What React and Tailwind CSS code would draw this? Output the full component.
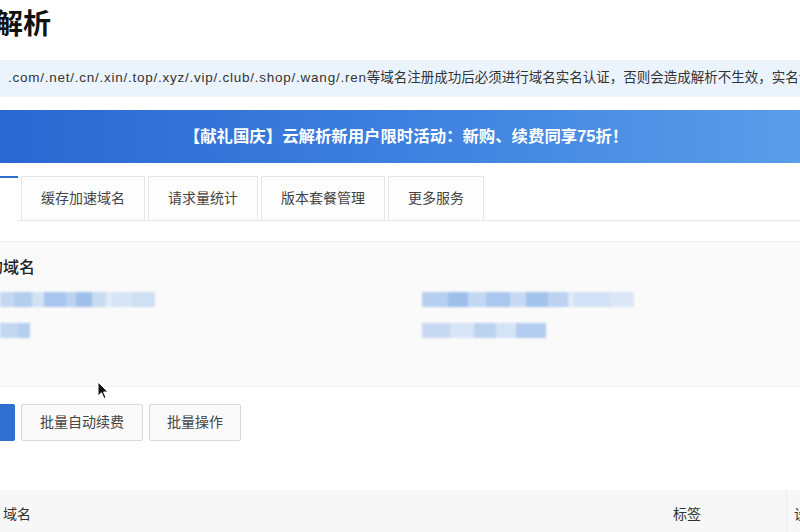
const blurRow1 = [
  ["#c4d8f2", 14], ["#b3cdef", 18], ["#d3e2f5", 12], ["#a8c6ed", 22], ["#bcd3f0", 10], ["#9fc0ea", 16], ["#c9dbf3", 14], ["#e1ebf8", 6], ["#d7e4f6", 20], ["#cfdff4", 23],
];
const blurRow2 = [["#c2d7f1", 18], ["#b5cdef", 12]];
const blurRow3 = [
  ["#b6cff0", 26], ["#9fbfea", 20], ["#c3d8f2", 18], ["#aac7ed", 24], ["#c6daf3", 16], ["#a4c3ec", 22], ["#bcd2f0", 20], ["#e0eaf8", 6], ["#d2e1f5", 36], ["#dbe7f7", 24],
];
const blurRow4 = [["#c8daf3", 28], ["#d8e5f6", 24], ["#bcd3f0", 22], ["#d5e3f6", 20], ["#b3ccef", 30]];

function Mosaic({ cells }) {
  return (
    <div className="flex h-[15px] blur-[1px]">
      {cells.map(([c, w], i) => (
        <div key={i} style={{ background: c, width: w }} className="h-full" />
      ))}
    </div>
  );
}

const tabs = ["缓存加速域名", "请求量统计", "版本套餐管理", "更多服务"];

export default function App() {
  return (
    <div className="relative h-[532px] w-[800px] overflow-hidden bg-white font-['Liberation_Sans','Noto_Sans_CJK_SC',sans-serif] text-[#333]">
      {/* page title */}
      <div className="flex h-[44px] items-center -ml-[33px]">
        <h1 className="text-[28px] font-bold leading-none text-[#111] font-['Noto_Sans_CJK_SC',sans-serif]">云解析</h1>
      </div>

      {/* notice */}
      <div className="mt-[16px] flex h-[37px] items-center whitespace-nowrap bg-[#ebf4fd] pl-[8px] text-[13.5px]">
        <span className="tracking-[0.75px]">.com/.net/.cn/.xin/.top/.xyz/.vip/.club/.shop/.wang/.ren</span>
        <span>等域名注册成功后必须进行域名实名认证，否则会造成解析不生效，实名认证审核通过后的1-2个工作日解析可恢复使用。</span>
      </div>

      {/* promo banner */}
      <div className="mt-[13px] flex h-[53px] items-center justify-center bg-linear-to-r from-[#2b67d1] via-[#3d80df] to-[#5a9de9] pl-[12px] text-[16.4px] font-bold text-white">
        【献礼国庆】云解析新用户限时活动：新购、续费同享75折！
      </div>

      {/* tabs */}
      <div className="mt-[13px] flex h-[45px] -ml-[90px]">
        <div className="flex w-[108px] shrink-0 items-center justify-center border-t-2 border-[#2f6fd0] bg-white px-5 text-[14px]">
          域名解析
        </div>
        <div className="flex flex-1 gap-[3px] border-b border-[#e6e6e6] pl-[3px]">
          {tabs.map((t) => (
            <div
              key={t}
              className="flex items-center border border-b-0 border-[#e6e6e6] bg-[#fdfdfd] px-[19px] text-[14px] text-[#444]"
            >
              {t}
            </div>
          ))}
        </div>
      </div>

      {/* my domains panel */}
      <div className="mt-[20px] h-[146px] border-y border-[#eeeeee] bg-[#fafafa]">
        <div className="mt-[16px] -ml-[29px] whitespace-nowrap text-[16px] font-medium leading-[20px] text-[#222]">我的域名</div>
        <div className="mt-[14px] grid grid-cols-[422px_1fr]">
          <Mosaic cells={blurRow1} />
          <Mosaic cells={blurRow3} />
        </div>
        <div className="mt-[16px] grid grid-cols-[422px_1fr]">
          <Mosaic cells={blurRow2} />
          <Mosaic cells={blurRow4} />
        </div>
      </div>

      {/* action buttons */}
      <div className="mt-[17px] flex h-[37px] gap-[6px] -ml-[85px]">
        <button className="w-[100px] shrink-0 rounded-[2px] bg-[#2f6fd0] text-[14px] text-white">添加域名</button>
        <button className="shrink-0 rounded-[2px] border border-[#d9d9d9] bg-[#fafafa] px-[18px] text-[14px] text-[#444]">批量自动续费</button>
        <button className="shrink-0 rounded-[2px] border border-[#d9d9d9] bg-[#fafafa] px-[17px] text-[14px] text-[#444]">批量操作</button>
      </div>

      {/* table header */}
      <div className="mt-[49px] flex h-[48px] items-center whitespace-nowrap bg-[#f7f7f7] text-[14px] text-[#333]">
        <div className="w-[673px] shrink-0 pl-[3px]">域名</div>
        <div className="w-[113px] shrink-0">标签</div>
        <div className="flex h-full w-[100px] shrink-0 items-center border-l border-[#ececec] pl-[7px]">设置</div>
      </div>

      {/* mouse cursor */}
      <svg className="absolute left-[97px] top-[381px]" width="12" height="19" viewBox="0 0 12 19">
        <path d="M1 1 L1 15 L4.5 11.8 L7 17.5 L9 16.6 L6.6 11 L11 11 Z" fill="#111" stroke="#fff" strokeWidth="1" strokeLinejoin="round" />
      </svg>
    </div>
  );
}
